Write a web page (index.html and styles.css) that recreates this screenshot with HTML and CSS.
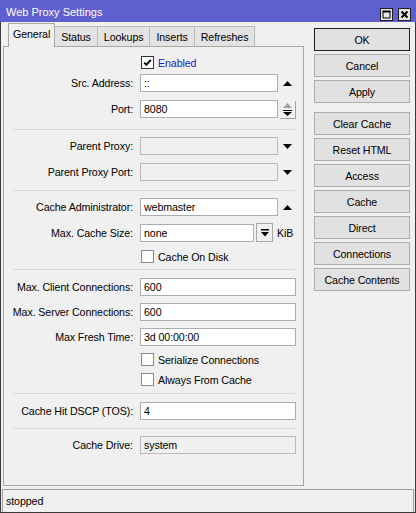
FILE: index.html
```html
<!DOCTYPE html>
<html>
<head>
<meta charset="utf-8">
<link rel="stylesheet" href="styles.css">
</head>
<body>
<div class="window">
  <div class="titlebar">
    <span class="title">Web Proxy Settings</span>
    <div class="wbtns">
      <span class="wbtn"><svg width="11" height="11" viewBox="0 0 11 11"><path d="M2 2.5h7v6.5h-7z" fill="none" stroke="#000" stroke-width="1"/><rect x="1.5" y="1.5" width="8" height="2" fill="#000"/></svg></span>
      <span class="wbtn"><svg width="11" height="11" viewBox="0 0 11 11"><path d="M2.5 2.5l6 6M8.5 2.5l-6 6" stroke="#000" stroke-width="2"/></svg></span>
    </div>
  </div>
  <div class="frame">
    <div class="main">
      <div class="left">
        <div class="tabs">
          <div class="tab active">General</div>
          <div class="tab">Status</div>
          <div class="tab">Lookups</div>
          <div class="tab">Inserts</div>
          <div class="tab">Refreshes</div>
        </div>
        <div class="panel">
          <div class="check">
            <span class="box on"><svg width="11" height="11" viewBox="0 0 11 11"><path d="M2.2 5.6l2.2 2.3 4.4-5" fill="none" stroke="#000" stroke-width="1.9"/></svg></span>
            <span class="ctext blue">Enabled</span>
          </div>
          <div class="row mt5">
            <span class="lbl">Src. Address:</span>
            <span class="inp">::</span>
            <svg class="arr" width="9" height="5" viewBox="0 0 9 5"><path d="M0 5L4.5 0L9 5Z"/></svg>
          </div>
          <div class="row mt8">
            <span class="lbl">Port:</span>
            <span class="inp">8080</span>
            <svg class="spin" width="16" height="18" viewBox="0 0 16 18"><path d="M3 7L7.5 2L12 7Z" fill="#a0a0a0"/><rect x="3" y="9" width="9" height="1" fill="#000"/><path d="M3 11H12L7.5 15Z" fill="#000"/><path d="M0 17.5H15.5V0" fill="none" stroke="#a0a0a0"/></svg>
          </div>
          <div class="sep mt11"></div>
          <div class="row mt7">
            <span class="lbl">Parent Proxy:</span>
            <span class="inp dis"></span>
            <svg class="arr" width="9" height="5" viewBox="0 0 9 5"><path d="M0 0L4.5 5L9 0Z"/></svg>
          </div>
          <div class="row mt8">
            <span class="lbl">Parent Proxy Port:</span>
            <span class="inp dis"></span>
            <svg class="arr" width="9" height="5" viewBox="0 0 9 5"><path d="M0 0L4.5 5L9 0Z"/></svg>
          </div>
          <div class="sep mt9"></div>
          <div class="row mt7">
            <span class="lbl">Cache Administrator:</span>
            <span class="inp">webmaster</span>
            <svg class="arr" width="9" height="5" viewBox="0 0 9 5"><path d="M0 5L4.5 0L9 5Z"/></svg>
          </div>
          <div class="row mt8">
            <span class="lbl">Max. Cache Size:</span>
            <span class="inp mid">none</span>
            <span class="ddbtn"><svg width="8" height="8" viewBox="0 0 8 8"><rect x="0" y="0" width="8" height="1.5" fill="#000"/><path d="M0 3H8L4 7.5Z" fill="#000"/></svg></span>
            <span class="unit">KiB</span>
          </div>
          <div class="check mt8">
            <span class="box"></span>
            <span class="ctext">Cache On Disk</span>
          </div>
          <div class="sep mt6"></div>
          <div class="row mt8">
            <span class="lbl">Max. Client Connections:</span>
            <span class="inp wide">600</span>
          </div>
          <div class="row mt7">
            <span class="lbl">Max. Server Connections:</span>
            <span class="inp wide">600</span>
          </div>
          <div class="row mt7">
            <span class="lbl">Max Fresh Time:</span>
            <span class="inp wide">3d 00:00:00</span>
          </div>
          <div class="check mt7">
            <span class="box"></span>
            <span class="ctext">Serialize Connections</span>
          </div>
          <div class="check mt7">
            <span class="box"></span>
            <span class="ctext">Always From Cache</span>
          </div>
          <div class="sep mt7"></div>
          <div class="row mt8">
            <span class="lbl">Cache Hit DSCP (TOS):</span>
            <span class="inp wide">4</span>
          </div>
          <div class="sep mt8"></div>
          <div class="row mt7">
            <span class="lbl">Cache Drive:</span>
            <span class="inp wide dis">system</span>
          </div>
        </div>
      </div>
      <div class="buttons">
        <div class="btn default">OK</div>
        <div class="btn">Cancel</div>
        <div class="btn">Apply</div>
        <div class="btn group">Clear Cache</div>
        <div class="btn">Reset HTML</div>
        <div class="btn">Access</div>
        <div class="btn">Cache</div>
        <div class="btn">Direct</div>
        <div class="btn">Connections</div>
        <div class="btn">Cache Contents</div>
      </div>
    </div>
    <div class="status">stopped</div>
  </div>
</div>
</body>
</html>
```
FILE: styles.css
```css
body {
  margin: 0;
  font-family: "Liberation Sans", Arial, sans-serif;
  font-size: 10.67px;
  letter-spacing: -0.1px;
  color: #000;
  background: #f0f0f0;
}
.window {
  width: 416px;
  height: 513px;
  background: #f0f0f0;
  display: flex;
  flex-direction: column;
}
.titlebar {
  height: 22px;
  flex: none;
  background: #5f5fcf;
  color: #fff;
  display: flex;
  align-items: center;
  justify-content: space-between;
  padding: 0 5px 0 6px;
  box-sizing: border-box;
}
.title {
  font-size: 11px;
  letter-spacing: 0;
  padding-top: 2px;
}
.wbtns {
  display: flex;
  gap: 5px;
  margin-top: 6px;
}
.wbtn {
  width: 13px;
  height: 13px;
  box-sizing: border-box;
  border: 1px solid #1e1e1e;
  background: #e4e4e4;
  display: flex;
  align-items: center;
  justify-content: center;
}
.wbtn svg { display: block; }
.frame {
  flex: 1;
  border: 1px solid #3a3a3a;
  border-top: none;
  display: flex;
  flex-direction: column;
}
.main {
  display: flex;
  height: 467px;
  flex: none;
}
.left {
  margin: 1px 0 0 2px;
  width: 301px;
}
.tabs {
  height: 23px;
  display: flex;
  align-items: flex-end;
  padding-left: 5px;
}
.tab {
  height: 20px;
  box-sizing: border-box;
  padding: 3px 6px 0;
  border: 1px solid #b9b9b9;
  border-bottom: none;
  margin-left: -1px;
  background: #e3e3e3;
  line-height: 14px;
}
.tab.active {
  height: 24px;
  margin-left: 0;
  margin-bottom: -1px;
  padding: 3px 4px 0;
  background: #f0f0f0;
  border-color: #a8a8a8;
  position: relative;
  z-index: 1;
}
.panel {
  height: 440px;
  box-sizing: border-box;
  border: 1px solid #a8a8a8;
  background: #f0f0f0;
  padding-top: 9px;
  display: flex;
  flex-direction: column;
}
.row {
  display: flex;
  align-items: center;
  height: 18px;
  flex: none;
}
.lbl {
  width: 136px;
  flex: none;
  box-sizing: border-box;
  padding-right: 7px;
  text-align: right;
  white-space: nowrap;
}
.inp {
  width: 138px;
  height: 18px;
  flex: none;
  box-sizing: border-box;
  border: 1px solid #abadb3;
  background: #fff;
  padding-left: 3px;
  display: flex;
  align-items: center;
}
.inp.mid { width: 114px; }
.inp.wide { width: 156px; }
.inp.dis {
  background: #f0f0f0;
  border-color: #b9b9b9;
}
.arr {
  margin-left: 5px;
  display: block;
}
.spin {
  margin-left: 2px;
  margin-top: 1px;
  display: block;
  align-self: flex-start;
}
.ddbtn {
  margin-left: 2px;
  width: 17px;
  height: 19px;
  box-sizing: border-box;
  border: 1px solid #a8a8a8;
  background: #f0f0f0;
  display: flex;
  align-items: center;
  justify-content: center;
  align-self: flex-start;
  margin-top: -1px;
}
.ddbtn svg { display: block; }
.unit { margin-left: 4px; }
.check {
  display: flex;
  align-items: center;
  height: 13px;
  padding-left: 137px;
  flex: none;
}
.box {
  width: 13px;
  height: 13px;
  box-sizing: border-box;
  border: 1px solid #8a8a8a;
  background: #fff;
  display: flex;
  align-items: center;
  justify-content: center;
}
.box.on { border-color: #333; }
.box svg { display: block; }
.ctext { margin-left: 4px; }
.blue { color: #2020c0; }
.sep {
  height: 1px;
  background: #d9d9d9;
  margin-left: 9px;
  margin-right: 8px;
  flex: none;
}
.mt5 { margin-top: 5px; }
.mt6 { margin-top: 6px; }
.mt7 { margin-top: 7px; }
.mt8 { margin-top: 8px; }
.mt9 { margin-top: 9px; }
.mt11 { margin-top: 11px; }
.buttons {
  margin: 6px 0 0 10px;
  width: 96px;
  display: flex;
  flex-direction: column;
  gap: 3px;
}
.btn {
  height: 23px;
  box-sizing: border-box;
  border: 1px solid #adadad;
  background: #e1e1e1;
  display: flex;
  align-items: center;
  justify-content: center;
}
.btn.default { border-color: #1e1e1e; }
.btn.group { margin-top: 6px; }
.status {
  height: 23px;
  box-sizing: border-box;
  margin: 0 1px;
  border: 1px solid #a0a0a0;
  border-bottom: none;
  padding-left: 3px;
  display: flex;
  align-items: center;
}
```
